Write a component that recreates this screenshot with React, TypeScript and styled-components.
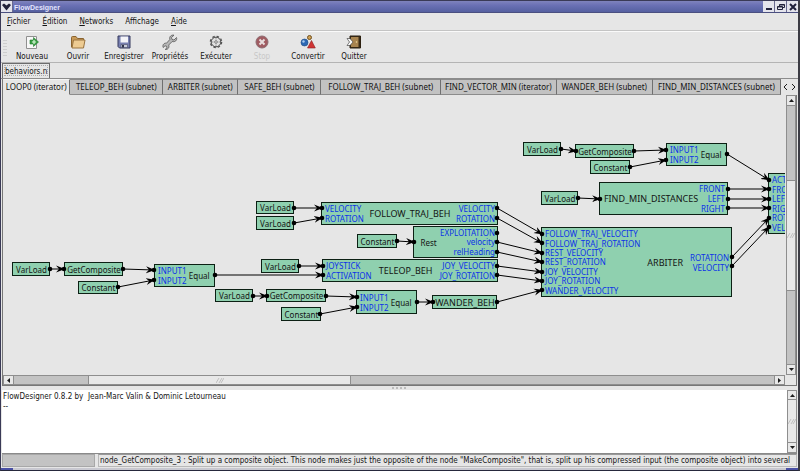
import React from "react";
import styled, { createGlobalStyle } from "styled-components";

const sans = '"DejaVu Sans Condensed", "DejaVu Sans", sans-serif';
const wideSans = '"Noto Sans", "Open Sans", sans-serif';

const GlobalStyle = createGlobalStyle`
  * { box-sizing: border-box; }
  html, body, #root { height: 100%; }
  body { margin: 0; background: #20203a; color: #141414; font: 8px/10px ${sans}; }
  button { font: inherit; color: inherit; border: 0; padding: 0; margin: 0; background: none; }
`;

const Window = styled.div`
  display: flex;
  flex-direction: column;
  height: 100vh;
  background: #e6e6e6;
  border: 1px solid #3a3a56;
  border-right: 2px solid #3c3c44;
  border-bottom: 1px solid #26283c;
  overflow: hidden;
`;

const TitleBar = styled.header`
  display: flex;
  flex: none;
  height: 12px;
  background: linear-gradient(#7f83bd, #6a70b4 40%, #5560a0);
  border-bottom: 1px solid #4a4f80;
`;

const WindowButton = styled.button`
  display: grid;
  place-items: center;
  width: 12px;
  background: #e4e4ec;
  border-right: 1px solid #6a6a90;
  &:last-child { border-right: 0; width: 11px; }
`;

const WindowTitle = styled.h1`
  flex: 1;
  margin: 0;
  padding-left: 1px;
  color: #e4e4ff;
  font: 700 7px/13px "Liberation Sans", sans-serif;
`;

const MenuBar = styled.nav`
  display: flex;
  flex: none;
  height: 18px;
  padding-left: 6px;
  gap: 12px;
  align-items: center;
  border-bottom: 1px solid #c4c4c4;
`;

const ToolBar = styled.div`
  display: flex;
  flex: none;
  height: 32px;
  padding-left: 2px;
  border-top: 1px solid #fafafa;
  border-bottom: 1px solid #b4b4b4;
`;

const Grip = styled.div`
  width: 4px;
  margin: 8px 2px 6px 0;
  background: repeating-linear-gradient(#cecece 0 1px, transparent 1px 3px);
`;

const ToolButton = styled.button`
  display: flex;
  flex-direction: column;
  align-items: center;
  justify-content: center;
  width: 46px;
  padding-top: 1px;
  gap: 2px;
  white-space: nowrap;
  svg { display: block; }
  &:disabled { color: #c8c8c8; }
`;

const FileTabs = styled.div`
  display: flex;
  flex: none;
  height: 16px;
  padding-left: 1px;
  border-bottom: 1px solid #8c8c8c;
`;

const FileTab = styled.button`
  height: 15px;
  padding: 1px 2px 0;
  border: 1px solid #6c6c6c;
  border-bottom: 0;
  outline: 1px dotted #aaa;
  outline-offset: -3px;
`;

const NetworkTabs = styled.div`
  display: flex;
  flex: none;
  height: 16px;
  margin: 0 1px;
  border-left: 1px solid #777;
`;

const NetworkTab = styled.button<{ $basis: number; $active?: boolean }>`
  flex: ${p => p.$basis} 1 0;
  min-width: 0;
  white-space: nowrap;
  font-family: ${wideSans};
  background: ${p => (p.$active ? "#e6e6e6" : "#c2c2c2")};
  border-right: 1px solid #707070;
  border-top: 1px solid ${p => (p.$active ? "#f4f4f4" : "#8c8c8c")};
  border-bottom: 1px solid ${p => (p.$active ? "#e6e6e6" : "#8c8c8c")};
`;

const TabArrows = styled.div`
  display: flex;
  flex: 16 1 0;
  button { flex: 1; display: grid; place-items: center; }
`;

const Workspace = styled.main`
  display: grid;
  flex: 1;
  min-height: 0;
  grid-template: minmax(0, 1fr) 10px / minmax(0, 1fr) 10px;
  column-gap: 1px;
  margin: 0 1px;
  border: 1px solid #777;
  border-top: 0;
`;

const Canvas = styled.div`
  position: relative;
  overflow: hidden;
`;

const Wires = styled.svg`
  position: absolute;
  inset: 0;
  width: 100%;
  height: 100%;
`;

const NodeBox = styled.div<{ $x: number; $y: number; $w: number; $h: number }>`
  position: absolute;
  left: ${p => p.$x}px;
  top: ${p => p.$y}px;
  width: ${p => p.$w}px;
  height: ${p => p.$h}px;
  display: flex;
  padding: 1px 2px 1px 3px;
  background: #8fd0af;
  border: 1px solid #0c2014;
  white-space: nowrap;
  font-family: ${wideSans};
  line-height: 9px;
`;

const NodeTitle = styled.span<{ $large: boolean }>`
  flex: 1;
  display: flex;
  align-items: center;
  justify-content: center;
  min-width: 0;
  font-size: ${p => (p.$large ? 9 : 8)}px;
`;

const Ports = styled.div<{ $end?: boolean }>`
  display: flex;
  flex-direction: column;
  justify-content: center;
  align-items: ${p => (p.$end ? "flex-end" : "flex-start")};
  color: #0c30e8;
`;

const Port = styled.span`
  display: flex;
  flex: 0 1 10px;
  min-height: 0;
  align-items: center;
`;

const ScrollBar = styled.div<{ $vertical?: boolean }>`
  display: flex;
  flex-direction: ${p => (p.$vertical ? "column" : "row")};
  min-width: 0;
  min-height: 0;
  background: #c3c3c3;
  border: 1px solid #8e8e8e;
`;

const ScrollButton = styled.button`
  display: grid;
  place-items: center;
  flex: 0 0 9px;
  background: #e8e8e8;
  outline: 1px solid #8e8e8e;
`;

const Trough = styled.div<{ $size: number }>`
  flex: ${p => p.$size} 1 0;
`;

const Thumb = styled.div<{ $size: number }>`
  flex: ${p => p.$size} 1 0;
  display: grid;
  place-items: center;
  background: #e8e8e8;
  outline: 1px solid #8e8e8e;
`;

const PaneHandle = styled.div`
  flex: none;
  display: grid;
  place-items: center;
  height: 4px;
  &::after { content: ""; width: 16px; height: 2px; background: repeating-linear-gradient(90deg, #bbb 0 2px, transparent 2px 4px); }
`;

const Console = styled.section`
  display: grid;
  flex: 0 0 64px;
  grid-template-columns: minmax(0, 1fr) 10px;
  margin: 0 1px;
  background: #fff;
  border-bottom: 1px solid #8a8a8a;
`;

const Log = styled.pre`
  margin: 0;
  padding: 2px 0 0 1px;
  font: 8px/10px ${sans};
`;

const StatusBar = styled.footer`
  display: grid;
  flex: none;
  grid-template-columns: 93px minmax(0, 1fr);
  gap: 3px;
  height: 13px;
  margin: 0 1px 1px;
`;

const Progress = styled.div`
  background: #c3c3c3;
  border: 1px solid #a8a8a8;
`;

const Status = styled.output`
  padding-left: 1px;
  border: 1px solid #b8b8b8;
  border-top-color: #999;
  white-space: nowrap;
  overflow: hidden;
  line-height: 12px;
`;

const ResizeFrame = styled.div`
  display: flex;
  justify-content: space-between;
  flex: none;
  height: 2px;
  background: #c8c8d0;
  &::before, &::after { content: ""; width: 12px; background: #4a50a4; }
`;

type Direction = "up" | "down" | "left" | "right";
const triangles: Record<Direction, string> = {
  up: "M0 4L2.5 1L5 4z",
  down: "M0 1L2.5 4L5 1z",
  left: "M4 0L1 2.5L4 5z",
  right: "M1 0L4 2.5L1 5z",
};

const ArrowButton = ({ dir }: { dir: Direction }) => (
  <ScrollButton aria-label={dir}>
    <svg width="5" height="5"><path d={triangles[dir]} fill="#1c1c1c" /></svg>
  </ScrollButton>
);

const ThumbGrip = () => (
  <svg width="8" height="5"><path d="M0 5L3 0M3 5L6 0M5 5L8 0" stroke="#c0c0c0" fill="none" /></svg>
);

const icons: Record<string, React.ReactNode> = {
  Nouveau: (
    <>
      <path d="M2.500 2.500h10v12h-10z" fill="#f8f8f8" stroke="#909090" />
      <path d="M6 6h3.500V3.500L14.500 8l-5 4.500V10H6z" fill="#3aa044" stroke="#1f7a2c" strokeWidth=".6" />
      <path d="M8 8h4M10 6v4" stroke="#d8f5d8" strokeWidth="1.200" />
    </>
  ),
  Ouvrir: (
    <>
      <path d="M1.500 13V3.500Q1.500 2.500 2.500 2.500H6l1.500 2h6v8.500z" fill="#c89a58" stroke="#8a6430" />
      <path d="M2 14L3.500 6h11.500L13.500 14z" fill="#edcb92" stroke="#9a7440" />
    </>
  ),
  Enregistrer: (
    <>
      <path d="M2 2h12v12H3.500L2 12.500z" fill="#7880b0" stroke="#34395c" />
      <path d="M4.500 2.500h7.500V8.500h-7.500z" fill="#f4f4f8" />
      <path d="M5 10.500h6.500v3H5z" fill="#c8ccd8" stroke="#484c68" strokeWidth=".6" />
      <path d="M6 11h2v2.500H6z" fill="#30344c" />
    </>
  ),
  "Propriétés": (
    <path
      d="M14.500 3.500L12 6l-2-.5L9.500 3.500L12 1.200C9.500.6 7 2.500 7.800 5.500L4.500 9.200C2 8.700.2 11 1.200 13.500L3 11.800l1.600.4.400 1.700L3.200 15.400C5.800 16 7.600 13.500 6.700 11L10.200 7.500C13 8.500 15.500 6 14.500 3.500z"
      fill="#b8b8b8" stroke="#555" strokeWidth=".8"
    />
  ),
  "Exécuter": (
    <>
      <circle cx="8" cy="8" r="5.600" fill="none" stroke="#555" strokeWidth="1.400" strokeDasharray="2.400 2" />
      <circle cx="8" cy="8" r="4.800" fill="#e2e2e2" stroke="#4a4a4a" />
      <circle cx="8" cy="8" r="1.300" fill="#fff" stroke="#555" strokeWidth=".8" />
      <path d="M8 4v1.500M8 10.500V12M4 8h1.500M10.500 8H12" stroke="#999" />
    </>
  ),
  Stop: (
    <>
      <circle cx="8" cy="8" r="6" fill="#a05c62" stroke="#8d6b70" />
      <path d="M5.500 5.500l5 5M10.500 5.500l-5 5" stroke="#e8dede" strokeWidth="2" />
    </>
  ),
  Convertir: (
    <>
      <circle cx="9.500" cy="3.500" r="2" fill="#d0a050" stroke="#705020" />
      <circle cx="4.500" cy="8.500" r="3.500" fill="#2c68b4" stroke="#1c4880" strokeWidth=".6" />
      <circle cx="3.500" cy="7.500" r="1.200" fill="#a8cbf0" />
      <path d="M11.500 6.500l3.800 7.500H7.500z" fill="#d03434" stroke="#8c2020" strokeWidth=".6" />
    </>
  ),
  Quitter: (
    <>
      <path d="M4 2h10.500v12H4z" fill="#3a2c18" stroke="#2c2010" />
      <path d="M5 3h7.500v10H5z" fill="#a88450" />
      <circle cx="10.500" cy="8" r=".8" fill="#f0dca0" />
      <path d="M1 4.500h3l3 3.500-3 3.500H1L3.500 8z" fill="#fafafa" stroke="#333" strokeWidth=".6" />
    </>
  ),
};

const menus: [string, string, string][] = [
  ["", "F", "ichier"], ["", "É", "dition"], ["", "N", "etworks"], ["Afficha", "g", "e"], ["", "A", "ide"],
];

const networks: [string, number][] = [
  ["LOOP0 (iterator)", 67], ["TELEOP_BEH (subnet)", 93], ["ARBITER (subnet)", 75], ["SAFE_BEH (subnet)", 83],
  ["FOLLOW_TRAJ_BEH (subnet)", 120], ["FIND_VECTOR_MIN (iterator)", 116], ["WANDER_BEH (subnet)", 96],
  ["FIND_MIN_DISTANCES (subnet)", 129],
];

interface NodeSpec { title: string; at: [number, number, number, number]; inputs?: string[]; outputs?: string[] }

const nodes: NodeSpec[] = [
  { title: "VarLoad", at: [12, 262, 38, 14] },
  { title: "GetComposite", at: [64, 262, 59, 14] },
  { title: "Constant", at: [78, 281, 40, 13] },
  { title: "Equal", at: [154, 264, 61, 23], inputs: ["INPUT1", "INPUT2"] },
  { title: "VarLoad", at: [256, 201, 38, 13] },
  { title: "VarLoad", at: [256, 216, 38, 14] },
  { title: "FOLLOW_TRAJ_BEH", at: [321, 202, 177, 23], inputs: ["VELOCITY", "ROTATION"], outputs: ["VELOCITY", "ROTATION"] },
  { title: "Constant", at: [357, 234, 40, 14] },
  { title: "Rest", at: [413, 226, 85, 32], outputs: ["EXPLOITATION", "velocity", "relHeading"] },
  { title: "VarLoad", at: [261, 259, 38, 14] },
  { title: "TELEOP_BEH", at: [322, 259, 176, 23], inputs: ["JOYSTICK", "ACTIVATION"], outputs: ["JOY_VELOCITY", "JOY_ROTATION"] },
  { title: "VarLoad", at: [215, 289, 38, 13] },
  { title: "GetComposite", at: [266, 289, 60, 13] },
  { title: "Constant", at: [281, 307, 40, 14] },
  { title: "Equal", at: [356, 290, 61, 24], inputs: ["INPUT1", "INPUT2"] },
  { title: "WANDER_BEH", at: [432, 295, 65, 14] },
  { title: "VarLoad", at: [523, 142, 38, 14] },
  { title: "GetComposite", at: [575, 144, 59, 14] },
  { title: "Constant", at: [590, 160, 40, 14] },
  { title: "Equal", at: [666, 143, 61, 23], inputs: ["INPUT1", "INPUT2"] },
  { title: "VarLoad", at: [541, 191, 37, 14] },
  { title: "FIND_MIN_DISTANCES", at: [599, 182, 129, 33], outputs: ["FRONT", "LEFT", "RIGHT"] },
  {
    title: "ARBITER", at: [541, 227, 191, 70],
    inputs: ["FOLLOW_TRAJ_VELOCITY", "FOLLOW_TRAJ_ROTATION", "REST_VELOCITY", "REST_ROTATION", "JOY_VELOCITY", "JOY_ROTATION", "WANDER_VELOCITY"],
    outputs: ["ROTATION", "VELOCITY"],
  },
  { title: "", at: [768, 173, 90, 61], inputs: ["ACTIVATION", "FRONT", "LEFT", "RIGHT", "ROTATION", "VELOCITY"] },
];

const wires: [number, number, number, number][] = [
  [50, 269, 64, 269], [123, 269, 154, 270], [118, 287, 154, 280], [215, 275, 323, 275],
  [294, 208, 322, 208], [294, 223, 322, 218], [397, 241, 414, 242], [299, 266, 323, 266],
  [253, 296, 267, 296], [326, 296, 357, 297], [320, 314, 357, 307], [417, 302, 433, 302],
  [497, 208, 542, 234], [497, 218, 542, 243], [497, 242, 542, 253], [497, 252, 542, 262],
  [497, 266, 542, 272], [497, 275, 542, 281], [497, 302, 542, 290],
  [561, 149, 576, 151], [634, 151, 666, 150], [630, 167, 666, 160], [727, 154, 769, 180],
  [578, 198, 600, 199], [728, 189, 769, 189], [728, 199, 769, 199], [728, 208, 769, 208],
  [732, 257, 769, 218], [732, 266, 769, 227],
];

const scroll = { x: 3, y: 95 };

const FlowNode = ({ title, at: [x, y, w, h], inputs = [], outputs = [] }: NodeSpec) => (
  <NodeBox $x={x - scroll.x} $y={y - scroll.y} $w={w} $h={h}>
    <Ports>{inputs.map(p => <Port key={p}>{p}</Port>)}</Ports>
    <NodeTitle $large={title.includes("_") || title === "ARBITER"}>{title}</NodeTitle>
    <Ports $end>{outputs.map(p => <Port key={p}>{p}</Port>)}</Ports>
  </NodeBox>
);

export default function App() {
  return (
    <>
      <GlobalStyle />
      <Window>
        <TitleBar>
          <WindowButton aria-label="Window menu">
            <svg width="9" height="8"><path d="M0 2L2 .5l2.500 2L7 .5 9 2 4.500 7.500z" fill="#20203a" /></svg>
          </WindowButton>
          <WindowTitle>FlowDesigner</WindowTitle>
          <WindowButton aria-label="Minimize"><svg width="8" height="8"><path d="M1 5h6v2H1z" fill="#20203a" /></svg></WindowButton>
          <WindowButton aria-label="Restore">
            <svg width="8" height="8" fill="none" stroke="#20203a"><path d="M2.500 3V1.500h5v3H6M.5 3.500h5v3h-5zM.5 4h5M2.500 2h5" /></svg>
          </WindowButton>
          <WindowButton aria-label="Close"><svg width="8" height="8"><path d="M1 1l6 6M7 1L1 7" stroke="#20203a" strokeWidth="2" /></svg></WindowButton>
        </TitleBar>
        <MenuBar>
          {menus.map(([a, key, b]) => <button key={a + key}>{a}<u>{key}</u>{b}</button>)}
        </MenuBar>
        <ToolBar>
          <Grip />
          {Object.entries(icons).map(([label, art]) => (
            <ToolButton key={label} disabled={label === "Stop"}>
              <svg width="16" height="16" viewBox="0 0 16 16">{art}</svg>
              {label}
            </ToolButton>
          ))}
        </ToolBar>
        <FileTabs><FileTab>behaviors.n</FileTab></FileTabs>
        <NetworkTabs>
          {networks.map(([name, basis], i) => <NetworkTab key={name} $basis={basis} $active={i === 0}>{name}</NetworkTab>)}
          <TabArrows>
            <button aria-label="Previous tab"><svg width="5" height="8"><path d="M4 1L1 4l3 3" fill="none" stroke="#1c1c1c" /></svg></button>
            <button aria-label="Next tab"><svg width="5" height="8"><path d="M1 1l3 3-3 3" fill="none" stroke="#1c1c1c" /></svg></button>
          </TabArrows>
        </NetworkTabs>
        <Workspace>
          <Canvas>
            {nodes.map((n, i) => <FlowNode key={i} {...n} />)}
            <Wires>
              <defs>
                <marker id="head" markerWidth="9" markerHeight="8" refX="8" refY="4" orient="auto" markerUnits="userSpaceOnUse">
                  <path d="M0 0.500L9 4L0 7.500L3 4z" fill="#000" />
                </marker>
              </defs>
              <g transform={`translate(${-scroll.x} ${-scroll.y})`}>
                {wires.map(([x1, y1, x2, y2], i) => (
                  <g key={i}>
                    <line x1={x1} y1={y1} x2={x2} y2={y2} stroke="#000" markerEnd="url(#head)" />
                    <circle cx={x1} cy={y1} r="2.300" />
                    <circle cx={x2} cy={y2} r="2.300" />
                  </g>
                ))}
                <circle cx="497" cy="233" r="2.300" />
              </g>
            </Wires>
          </Canvas>
          <ScrollBar $vertical>
            <ArrowButton dir="up" />
            <Trough $size={76} />
            <Thumb $size={110}><ThumbGrip /></Thumb>
            <Trough $size={75} />
            <ArrowButton dir="down" />
          </ScrollBar>
          <ScrollBar>
            <ArrowButton dir="left" />
            <Trough $size={76} />
            <Thumb $size={261}><ThumbGrip /></Thumb>
            <Trough $size={425} />
            <ArrowButton dir="right" />
          </ScrollBar>
        </Workspace>
        <PaneHandle />
        <Console>
          <Log>{"FlowDesigner 0.8.2 by  Jean-Marc Valin & Dominic Letourneau\n--"}</Log>
          <ScrollBar $vertical>
            <ArrowButton dir="up" />
            <Thumb $size={1}><ThumbGrip /></Thumb>
            <ArrowButton dir="down" />
          </ScrollBar>
        </Console>
        <StatusBar>
          <Progress />
          <Status>node_GetComposite_3 : Split up a composite object. This node makes just the opposite of the node "MakeComposite", that is, split up his compressed input (the composite object) into several</Status>
        </StatusBar>
        <ResizeFrame />
      </Window>
    </>
  );
}
